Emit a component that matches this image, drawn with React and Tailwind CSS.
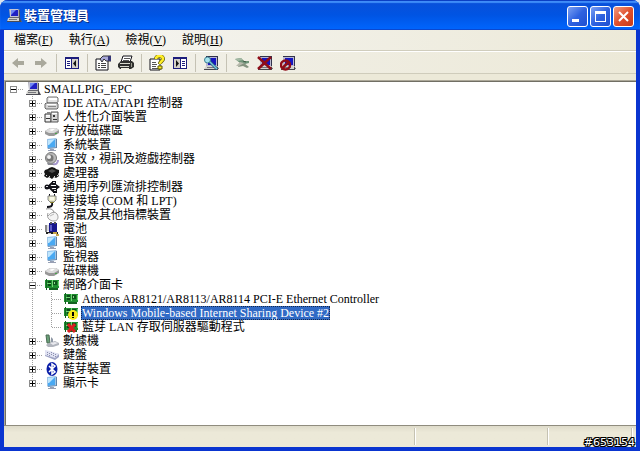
import { useState } from 'react';

const K = '#111118';

// ---------- small device icons, 16x14 ----------
const DEVICE_ICONS = {
  root: (
    <>
      <path d="M3 0h9l2 1v8h-2l-8-1z" fill="#a9a9b6" />
      <path d="M4 0h8v8H4z" fill="#c6c6d4" />
      <path d="M5 1h7v6H5z" fill="#2020c4" />
      <path d="M5 1h5L5 6z" fill="#6f86f4" />
      <path d="M13 1h1v8h-1z" fill="#55555f" />
      <path d="M3 8h10v1H3z" fill="#66666f" />
      <path d="M2 9h11l3 4H1z" fill="#d3d3ce" />
      <path d="M1 12h12v1H1zM13 9h1l2 4h-3z" fill="#4c4c54" />
      <path d="M3 10h8v1H3z" fill="#77777d" />
    </>
  ),
  ide: (
    <>
      <path d="M4 1h9l1 1v4l-2 1H4L3 6V2z" fill="#e4e4e4" stroke="#777" />
      <path d="M5 2h8v2H5z" fill="#fff" />
      <path d="M2 7h11l1 1v4l-1 1H2l-1-1V8z" fill="#d4d4d4" stroke="#666" />
      <path d="M3 8h9v1H3z" fill="#fff" />
      <path d="M4 10h8v1H4z" fill="#888" />
    </>
  ),
  hid: (
    <>
      <path d="M1 4h6v8H1z" fill="#eee" stroke="#333" />
      <path d="M7 2h7v10H7z" fill="#d5d5d5" stroke="#555" />
      <path d="M8 3h5v1H8zM2 5h4v1H2z" fill="#fff" />
      <path d="M2 8h4v1H2zM9 5h2v2H9zM9 9h4v1H9z" fill="#333" />
      <path d="M3 2h3v2H3z" fill="#888" />
    </>
  ),
  disk: (
    <>
      <path d="M1 7l5-3h6l3 2v3l-5 3H5L1 10z" fill="#989898" />
      <path d="M1 7l5-3h6l3 2-5 3H5z" fill="#dcdcdc" />
      <path d="M5 6l3-1h3l-3 2z" fill="#fff" />
      <path d="M11 9h2v1h-2z" fill="#49a549" />
    </>
  ),
  monitor: (
    <>
      <path d="M3 1l9-1 1 1v9l-9 1-1-1z" fill="#9fc4e6" />
      <path d="M4 2l7-1v8l-7 1z" fill="#4aa9f2" />
      <path d="M4 2l7-1-6 6H4z" fill="#bfe6fd" />
      <path d="M12 1h1v9h-1z" fill="#5f83a8" />
      <path d="M4 10l8-1v1l-8 1z" fill="#7c95b4" />
      <path d="M6 11h4v1h2v1H4v-1h2z" fill="#98a0b4" />
    </>
  ),
  sound: (
    <>
      <circle cx="7" cy="6" r="5.5" fill="#b8b8b8" stroke="#777" />
      <circle cx="6" cy="6" r="3.5" fill="#777" />
      <circle cx="5" cy="5" r="2" fill="#f2f2f2" />
      <path d="M9 12c3 1 5-1 5-4" fill="none" stroke="#a394cc" strokeWidth="2" />
      <path d="M3 11h5l2 2H4z" fill="#8a8a92" />
    </>
  ),
  cpu: (
    <>
      <path d="M1 4l3-1 1-1 3-1 3 1 1 1 3 1v3l-1 1 1 2-3 2-2-1-2 2-3-2-2 1-3-2 1-2-1-2z" fill="#161616" />
      <path d="M4 5l4-2 4 2-4 2z" fill="#4e4e4e" />
      <path d="M2 9h1v1H2zM5 10h1v1H5zM10 10h1v1h-1zM13 9h1v1h-1z" fill="#d0d0d0" />
    </>
  ),
  usb: (
    <>
      <path d="M1 7h12M4 7l4-4h2M5 7l4 4h2" fill="none" stroke={K} strokeWidth="2" />
      <path d="M12 4l4 3-4 3zM8 1h4v4H8zM9 9h4v4H9z" fill={K} />
      <circle cx="3" cy="7" r="2.5" fill={K} />
      <path d="M9 2h2v1H9zM10 10h2v1h-2zM2 6h2v1H2z" fill="#ddd" />
    </>
  ),
  port: (
    <>
      <path d="M5 0h1v3H5zM10 0h1v3h-1z" fill={K} />
      <path d="M4 2h8v4l-2 2H6L4 6z" fill="#e8e8c4" stroke="#888" />
      <path d="M6 3h4v3H6z" fill="#f7f7e8" />
      <path d="M6 8h4v1H6z" fill="#8c8430" />
      <path d="M8 9c1 3-1 4-5 4" fill="none" stroke={K} strokeWidth="2" />
    </>
  ),
  mouse: (
    <>
      <path d="M2 1c5-1 8 1 8 4" fill="none" stroke="#8d8d8d" />
      <path d="M4 5c-2 5 2 8 6 8s5-4 3-7-6-2-9 2" fill="#f4f4f4" stroke="#9b9b9b" />
      <path d="M6 8l4-2" stroke="#b9b9b9" />
    </>
  ),
  battery: (
    <>
      <path d="M5 1h8v9H5z" fill="#17178c" />
      <path d="M6 0h2v2H6zM10 0h2v2h-2z" fill="#555" />
      <path d="M6 3h2v6H6z" fill="#5c5cc8" />
      <path d="M3 3h2v6H3z" fill="#d8d8e0" />
      <path d="M1 3h2v7H1z" fill="#888" />
      <path d="M2 10h12v2H2z" fill="#222" />
      <path d="M9 10h4v2H9zM12 12h3v2h-3z" fill="#c7a54a" />
      <path d="M4 11h3v1H4z" fill="#ccc" />
    </>
  ),
  nic: (
    <>
      <path d="M1 2h14v8H1z" fill="#1f8f30" />
      <path d="M2 1h1v11H2zM5 10h9v2H5z" fill="#146322" />
      <path d="M4 3h3v2H4zM4 6h3v2H4z" fill="#0d4a18" />
      <path d="M9 3h4v4H9z" fill="#0d5519" />
      <path d="M8 2h1v7H8zM14 3h1v5h-1zM3 5h4v1H3z" fill="#74d876" />
      <path d="M10 4h1v2h-1z" fill="#8ed58e" />
    </>
  ),
  modem: (
    <>
      <path d="M2 1h3l1 8H3z" fill="#6ba078" stroke="#4a6b53" />
      <path d="M5 9l6-2 4 2v2l-6 2H4l-2-2z" fill="#b0b4bc" />
      <path d="M6 9l5-1 3 1-5 2z" fill="#e9e9ee" />
      <path d="M7 3l2 2v3H7z" fill="#8f98a6" />
    </>
  ),
  keyboard: (
    <>
      <path d="M1 3l5 1 9 2v3l-4 3-10-4z" fill="#9ea3c4" />
      <path d="M1 2l5 1 9 3-4 4L1 7z" fill="#e0e2f2" />
      <path d="M3 4h1v1H3zM5 5h1v1H5zM7 6h1v1H7zM9 7h1v1H9zM7 4h1v1H7zM9 5h1v1H9zM11 6h1v1h-1zM11 8h1v1h-1zM3 6h1v1H3zM5 7h1v1H5z" fill="#8b8fae" />
    </>
  ),
  bluetooth: (
    <>
      <ellipse cx="8" cy="7" rx="5.5" ry="7" fill="#0b1fa8" />
      <path d="M5 4l6 6-3 2V2l3 2-6 6" fill="none" stroke="#fff" strokeWidth="1.5" />
    </>
  ),
};

DEVICE_ICONS.nicWarning = (
  <>
    {DEVICE_ICONS.nic}
    <circle cx="10" cy="9" r="5" fill="#f7ea1c" />
    <path d="M9 6h2v4H9zM9 11h2v1H9z" fill="#000" />
  </>
);
DEVICE_ICONS.nicDisabled = (
  <>
    {DEVICE_ICONS.nic}
    <path d="M5 4l7 8M12 4l-7 8" stroke="#d81f1f" strokeWidth="3" />
  </>
);

function DeviceIcon({ name }) {
  return (
    <svg viewBox="0 0 16 14" className="h-3.5 w-4 shrink-0" aria-hidden="true">
      {DEVICE_ICONS[name]}
    </svg>
  );
}

// ---------- toolbar icons, 16x16 ----------
const PC = (
  <>
    <path d="M3 1h11v10H3z" fill="#b9b9d2" />
    <path d="M3 1h11v1H3zM14 1h1v10h-1z" fill="#33334c" />
    <path d="M5 3h8v7H5z" fill="#1616c0" />
    <path d="M3 11h10l2 3H1z" fill="#d3d3ce" />
    <path d="M1 14h14v1H1zM14 11l2 3h-2z" fill="#45454c" />
    <path d="M4 12h7v1H4z" fill="#77777d" />
  </>
);

const TOOL_ICONS = {
  back: <path d="M8 3v3h6v4H8v3L2 8z" fill="#aaa99c" />,
  forward: <path d="M8 3v3H2v4h6v3l6-5z" fill="#aaa99c" />,
  treePane: (
    <>
      <path d="M1 2h14v12H1z" fill="#1d1d7c" />
      <path d="M2 4h5v9H2z" fill="#fff" />
      <path d="M8 4h6v9H8z" fill="#d4d0c8" />
      <path d="M3 6h3v1H3zM3 8h3v1H3zM3 10h3v1H3z" fill="#1d1d7c" />
      <path d="M12 5v7L9 8.500z" fill="#111" />
    </>
  ),
  properties: (
    <>
      <path d="M1 4h12v11H1z" fill="#fff" stroke={K} />
      <path d="M3 8h2v1H3zM6 8h5v1H6zM3 10h2v1H3zM6 10h5v1H6zM3 12h2v1H3zM6 12h5v1H6z" fill="#444" />
      <path d="M5 4l3-3h4l4 0v5h-5L9 4 7 7z" fill="#a8a8d8" stroke="#333" />
      <path d="M13 1h3v5h-3z" fill="#353578" />
    </>
  ),
  print: (
    <>
      <path d="M5 1h9l-2 6H3z" fill="#fff" stroke={K} />
      <path d="M6 3h6v1H6zM5 5h6v1H5z" fill="#555" />
      <path d="M3 6h11l2 2v4l-3 2H2l-2-2V9z" fill="#30302e" />
      <path d="M2 8h10v1H2zM2 11h9v1H2z" fill="#d9d9cd" />
      <path d="M13 8h1v4h-1z" fill="#9c9c90" />
      <path d="M3 13h8v1H3z" fill="#f0f0e0" />
    </>
  ),
  help: (
    <>
      <path d="M1 4h10v11H1z" fill="#fff" stroke={K} />
      <path d="M3 7h4v1H3zM3 9h5v1H3zM3 11h4v1H3zM3 13h6v1H3z" fill="#555" />
      <path d="M7 4c0-4 7-4 7 0 0 2-3 2-3 5" fill="none" stroke="#5f5a00" strokeWidth="4" />
      <path d="M7 4c0-4 7-4 7 0 0 2-3 2-3 5" fill="none" stroke="#ffee28" strokeWidth="2.500" />
      <path d="M9 11h4v3H9z" fill="#ffee28" stroke="#5f5a00" />
    </>
  ),
  actionPane: (
    <>
      <path d="M1 2h14v12H1z" fill="#1d1d7c" />
      <path d="M2 4h6v9H2z" fill="#d4d0c8" />
      <path d="M9 4h5v9H9z" fill="#fff" />
      <path d="M10 6h3v1h-3zM10 8h3v1h-3zM10 10h3v1h-3z" fill="#1d1d7c" />
      <path d="M4 5v7l3-3.500z" fill="#111" />
    </>
  ),
  scan: (
    <>
      {PC}
      <path d="M6 6l8 8" stroke="#265a78" strokeWidth="3" />
      <path d="M6 6l8 8" stroke="#78c8dc" strokeWidth="1.500" />
      <circle cx="4.500" cy="5" r="3" fill="#a6e4ee" stroke="#3c7f93" />
    </>
  ),
  update: (
    <>
      <path d="M1 4l6-1 3 3 5 0v2l-4 1-5-1z" fill="#6f9478" />
      <path d="M1 4l6-1 2 2-5 1z" fill="#a3b8a3" />
      <path d="M5 10l5-2 5 4-2 1-4-2-5 1z" fill="#85937f" />
      <path d="M6 7l4 1-5 3H2z" fill="#b7b9ac" />
      <path d="M9 6l3 1" stroke="#425a48" />
    </>
  ),
  uninstall: (
    <>
      {PC}
      <path d="M1 2l13 12M14 2L1 14" stroke="#8f0d18" strokeWidth="2.500" />
    </>
  ),
  disable: (
    <>
      {PC}
      <circle cx="5.500" cy="10" r="4.500" fill="none" stroke="#8f0d18" strokeWidth="2.500" />
      <path d="M2.500 13l6-6" stroke="#8f0d18" strokeWidth="2.500" />
    </>
  ),
};

const TOOLBAR = [
  [['back', '上一頁'], ['forward', '下一頁']],
  [['treePane', '顯示/隱藏主控台樹狀目錄']],
  [['properties', '內容'], ['print', '列印']],
  [['help', '說明'], ['actionPane', '顯示/隱藏執行窗格']],
  [['scan', '掃描硬體變更']],
  [['update', '更新驅動程式'], ['uninstall', '解除安裝'], ['disable', '停用']],
];

const MENUS = [
  ['檔案', 'F'],
  ['執行', 'A'],
  ['檢視', 'V'],
  ['說明', 'H'],
];

const DEVICES = [
  { label: 'IDE ATA/ATAPI 控制器', icon: 'ide' },
  { label: '人性化介面裝置', icon: 'hid' },
  { label: '存放磁碟區', icon: 'disk' },
  { label: '系統裝置', icon: 'monitor' },
  { label: '音效，視訊及遊戲控制器', icon: 'sound' },
  { label: '處理器', icon: 'cpu' },
  { label: '通用序列匯流排控制器', icon: 'usb' },
  { label: '連接埠 (COM 和 LPT)', icon: 'port' },
  { label: '滑鼠及其他指標裝置', icon: 'mouse' },
  { label: '電池', icon: 'battery' },
  { label: '電腦', icon: 'monitor' },
  { label: '監視器', icon: 'monitor' },
  { label: '磁碟機', icon: 'disk' },
  {
    label: '網路介面卡',
    icon: 'nic',
    children: [
      { label: 'Atheros AR8121/AR8113/AR8114 PCI-E Ethernet Controller', icon: 'nic' },
      { label: 'Windows Mobile-based Internet Sharing Device #2', icon: 'nicWarning' },
      { label: '藍芽 LAN 存取伺服器驅動程式', icon: 'nicDisabled' },
    ],
  },
  { label: '數據機', icon: 'modem' },
  { label: '鍵盤', icon: 'keyboard' },
  { label: '藍芽裝置', icon: 'bluetooth' },
  { label: '顯示卡', icon: 'monitor' },
];

// dotted branch lines; "last" stops the vertical at the row's middle
function Lines({ last, branch = true, vertical = true }) {
  return (
    <g stroke="#a0a0a0" strokeDasharray="1 1" shapeRendering="crispEdges">
      {vertical && <path d={last ? 'M9.500 0v7' : 'M9.500 0v14'} />}
      {branch && <path d="M10 7.500h9" />}
    </g>
  );
}

function Branch(props) {
  return (
    <svg viewBox="0 0 19 14" className="h-3.5 w-[19px] shrink-0" aria-hidden="true">
      <Lines {...props} />
    </svg>
  );
}

function Expander({ open, root, last, label, onClick }) {
  return (
    <button type="button" aria-label={label} aria-expanded={open} onClick={onClick} className="shrink-0">
      <svg
        viewBox={root ? '2 0 17 14' : '0 0 19 14'}
        className={root ? 'block h-3.5 w-[17px]' : 'block h-3.5 w-[19px]'}
        shapeRendering="crispEdges"
      >
        <Lines last={last} vertical={!root} />
        <path d="M6.500 4.500h6v6h-6z" fill="#fff" stroke="#8c8c8c" />
        <path d={open ? 'M7 7.500h5' : 'M7 7.500h5M9.500 5v5'} stroke="#000" />
      </svg>
    </button>
  );
}

function Label({ icon, text, selected, onSelect }) {
  return (
    <button type="button" onClick={onSelect} className="flex items-center">
      <span className="flex w-[19px] justify-center">
        <DeviceIcon name={icon} />
      </span>
      <span
        className={
          selected
            ? 'ml-px h-3.5 bg-[#316ac5] px-px text-white outline-1 -outline-offset-1 outline-dotted outline-[#16294a]'
            : 'ml-px h-3.5 px-px'
        }
      >
        {text}
      </span>
    </button>
  );
}

function DeviceTree() {
  const [rootOpen, setRootOpen] = useState(true);
  const [open, setOpen] = useState({ 網路介面卡: true });
  const [selected, setSelected] = useState(DEVICES[13].children[1].label);

  const toggle = (label) => setOpen({ ...open, [label]: !open[label] });

  return (
    <ul className="text-xs leading-3.5 whitespace-nowrap text-black">
      <li className="flex h-3.5">
        <Expander root open={rootOpen} label="SMALLPIG_EPC" onClick={() => setRootOpen(!rootOpen)} />
        <Label icon="root" text="SMALLPIG_EPC" selected={selected === 'root'} onSelect={() => setSelected('root')} />
      </li>
      {rootOpen &&
        DEVICES.map((device, i) => {
          const last = i === DEVICES.length - 1;
          const isOpen = Boolean(open[device.label] && device.children);
          return (
            <li key={device.label} className="pl-[17px]">
              <div className="flex h-3.5">
                <Expander open={isOpen} last={last} label={device.label} onClick={() => toggle(device.label)} />
                <Label
                  icon={device.icon}
                  text={device.label}
                  selected={selected === device.label}
                  onSelect={() => setSelected(device.label)}
                />
              </div>
              {isOpen && (
                <ul>
                  {device.children.map((child, j) => (
                    <li key={child.label} className="flex h-3.5">
                      <Branch branch={false} />
                      <Branch last={j === device.children.length - 1} />
                      <Label
                        icon={child.icon}
                        text={child.label}
                        selected={selected === child.label}
                        onSelect={() => setSelected(child.label)}
                      />
                    </li>
                  ))}
                </ul>
              )}
            </li>
          );
        })}
    </ul>
  );
}

function TitleBar() {
  const base = 'h-[21px] w-[21px] rounded-[3px] border border-white';
  const blue = 'bg-linear-to-br from-[#7c9ff2] via-[#2f62e0] to-[#1f4fd0]';
  return (
    <header className="flex h-[30px] items-center bg-linear-to-b from-[#0a4fd8] via-[#0054e3] to-[#0066ff] pt-0.5 pr-1.5 pl-1.5 shadow-[inset_0_1px_0_#0b3fc4,inset_0_3px_1px_#3f8cf8,inset_0_-1px_0_#0a48d0]">
      <DeviceIcon name="root" />
      <h1 className="ml-0.5 flex-1 text-[13px] font-bold text-white [text-shadow:1px_1px_0_#0a2a80]">裝置管理員</h1>
      <div className="flex gap-0.5">
        <button type="button" aria-label="最小化" className={`${base} ${blue}`}>
          <svg viewBox="0 0 19 19">
            <path d="M4 12h7v3H4z" fill="#fff" />
          </svg>
        </button>
        <button type="button" aria-label="最大化" className={`${base} ${blue}`}>
          <svg viewBox="0 0 19 19">
            <path d="M4 4h11v11H4zM5 7v7h9V7z" fill="#fff" fillRule="evenodd" />
          </svg>
        </button>
        <button
          type="button"
          aria-label="關閉"
          className={`${base} bg-linear-to-br from-[#f09a80] via-[#e0502c] to-[#c83a18]`}
        >
          <svg viewBox="0 0 19 19">
            <path d="M5 5l9 9M14 5l-9 9" stroke="#fff" strokeWidth="2" />
          </svg>
        </button>
      </div>
    </header>
  );
}

export default function App() {
  return (
    <div className="h-screen bg-[#dbe4ee] font-['Liberation_Serif','Noto_Sans_CJK_TC',serif]">
      <div className="relative flex h-full flex-col overflow-hidden rounded-t-lg bg-[#0a35d0]">
        <TitleBar />

        <div className="mx-1 mb-1 flex min-h-0 flex-1 flex-col bg-[#ece9d8]">
          <nav className="flex h-[21px] items-center border-b border-[#d0cdbd] bg-linear-to-r from-[#f6f6f4] to-[#ece9d8] pl-0.5 text-xs leading-4">
            {MENUS.map(([text, key]) => (
              <button key={key} type="button" className="px-2">
                {text}(<u>{key}</u>)
              </button>
            ))}
          </nav>

          <div
            role="toolbar"
            className="flex h-[23px] items-center border-t border-b border-t-white border-b-[#cfccbb] bg-linear-to-r from-[#f3f2ec] to-[#ece9d8] pl-0.5"
          >
            {TOOLBAR.map((group, i) => (
              <div key={i} className="flex items-center">
                {i > 0 && (
                  <span className="flex w-2 justify-center">
                    <span className="h-[18px] w-px bg-[#c5c2b4]" />
                  </span>
                )}
                {group.map(([name, label]) => (
                  <button key={name} type="button" aria-label={label} className="flex w-[23px] justify-center">
                    <svg viewBox="0 0 16 16" className="h-4 w-4">
                      {TOOL_ICONS[name]}
                    </svg>
                  </button>
                ))}
              </div>
            ))}
          </div>

          <main className="mt-1.5 min-h-0 flex-1 border-t border-l border-[#aca899] bg-white">
            <div className="h-full overflow-hidden border-t border-l border-[#716f64]">
              <DeviceTree />
            </div>
          </main>

          <footer className="flex h-[22px] border-t border-[#8f8c7e] bg-linear-to-b from-[#dedbca] to-[#ece9d8] to-30% py-0.5">
            <div className="flex-1 border-r border-[#c5c2b2]" />
            <div className="w-[133px] border-r border-l border-r-[#c5c2b2] border-l-white" />
            <div className="w-[84px] border-r border-l border-r-[#c5c2b2] border-l-white" />
            <div className="w-1 border-l border-white" />
          </footer>
        </div>

        <p className="absolute right-[5px] bottom-0.5 font-['DejaVu_Sans',sans-serif] text-[11px] leading-3 text-white [text-shadow:1px_0_0_#000,-1px_0_0_#000,0_1px_0_#000,0_-1px_0_#000,1px_1px_0_#000,-1px_-1px_0_#000,1px_-1px_0_#000,-1px_1px_0_#000]">
          #653154
        </p>
      </div>
    </div>
  );
}
